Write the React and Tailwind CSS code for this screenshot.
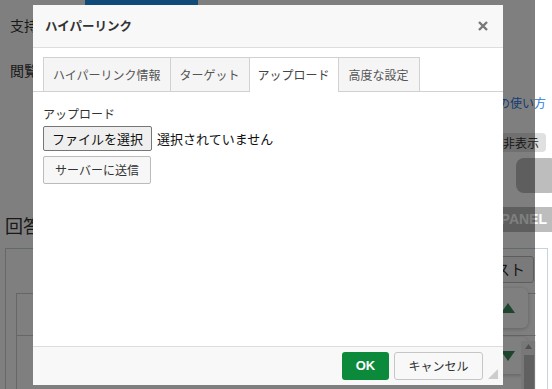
export default function App() {
  const font = "font-['Noto_Sans_CJK_JP','Liberation_Sans',sans-serif]";
  return (
    <div className={`relative w-[552px] h-[389px] overflow-hidden bg-white text-[#333] ${font}`}>
      {/* underlying page */}
      <div className="flex flex-col">
        <div className="flex h-[5px]">
          <div className="ml-[85px] w-[113px] bg-[#2196f3]" />
        </div>
        <div className="flex">
          <div className="flex-1 flex flex-col pl-[10px]">
            <div className="mt-[12px] text-[14px] leading-[16px]">支持</div>
            <div className="mt-[29px] text-[14px] leading-[16px]">閲覧</div>
            <div className="mt-[136px] -ml-[5px] text-[18px] leading-[22px]">回答</div>
          </div>
          <div className="w-[72px] flex flex-col items-end">
            <div className="mt-[90px] mr-[6px] whitespace-nowrap text-[12px] leading-[16px] text-[#2a7ae2]">マニュアルへの使い方</div>
            <div className="mt-[22px] mr-[6px] w-[50px] h-[19px] flex items-center justify-center rounded-[4px] bg-[#e0e0e0] text-[12px]">非表示</div>
            <div className="mt-[6px] -mr-[6px] w-[42px] h-[35px] rounded-[8px] bg-[#bdbdbd]" />
            <div className="mt-[14px] w-[82px] h-[25px] flex items-center justify-end pr-[5px] bg-[#bdbdbd] text-white font-bold text-[14px] font-['Liberation_Sans',sans-serif]">PANEL</div>
          </div>
        </div>
        <div className="mt-[12px] ml-[5px] mr-[4px] h-[200px] border border-[#c5d3da] flex flex-col">
          <div className="pt-[7px] pr-[13px] flex justify-end">
            <div className="h-[27px] px-[8px] flex items-center border border-[#bbb] rounded-[3px] bg-[#f5f5f5] text-[15px]">テスト</div>
          </div>
          <div className="mt-[10px] ml-[10px] mr-[11px] border-t border-l border-[#ccc] flex flex-col">
            <div className="h-[42px] border-b border-[#ccc] flex justify-end pr-[8px]">
              <div className="-mt-[6px] w-[40px] h-[40px] rounded-[6px] bg-white shadow-[0_1px_4px_rgba(0,0,0,0.25)] flex items-center justify-center">
                <svg width="14" height="10" viewBox="0 0 14 10"><polygon points="7,0 14,10 0,10" fill="#3b8a5a" /></svg>
              </div>
            </div>
            <div className="relative h-[60px] flex justify-end pr-[8px]">
              <div className="mt-[1px] w-[40px] h-[37px] rounded-[6px] bg-white shadow-[0_1px_4px_rgba(0,0,0,0.25)] flex items-center justify-center">
                <svg width="14" height="10" viewBox="0 0 14 10"><polygon points="0,0 14,0 7,10" fill="#3b8a5a" /></svg>
              </div>
              <div className="absolute right-0 top-[5px] bottom-0 w-[15px] bg-[#f0f0f0] flex flex-col items-center">
                <svg className="mt-[3px]" width="7" height="5" viewBox="0 0 7 5"><polygon points="3.5,0 7,5 0,5" fill="#a3a3a3" /></svg>
                <div className="mt-[6px] w-[10px] flex-1 bg-[#c1c1c1]" />
              </div>
            </div>
          </div>
        </div>
      </div>

      {/* overlay */}
      <div className="absolute left-0 top-0 h-full w-[535px] bg-black/50" />

      {/* dialog */}
      <div className="absolute left-[33px] top-[5px] w-[470px] h-[380px] bg-white flex flex-col">
        <div className="h-[43px] shrink-0 bg-[#f8f8f8] border-b border-[#ddd] flex items-center justify-between pl-[12px] pr-[15px]">
          <div className="text-[12.5px] font-bold text-[#333] leading-none">ハイパーリンク</div>
          <svg width="10" height="10" viewBox="0 0 10 10">
            <path d="M1 1 L9 9 M9 1 L1 9" stroke="#777" strokeWidth="2.4" />
          </svg>
        </div>
        <div className="pt-[9px] px-[10px] border-b border-[#d1d1d1] flex items-end">
          <div className="h-[34px] px-[9px] flex items-center border-t border-l border-r border-[#d1d1d1] bg-[#f5f5f5] text-[12px] text-[#555]">ハイパーリンク情報</div>
          <div className="h-[34px] px-[9px] flex items-center border-t border-r border-[#d1d1d1] bg-[#f5f5f5] text-[12px] text-[#555]">ターゲット</div>
          <div className="h-[35px] -mb-px px-[8px] flex items-center border-t border-r border-[#d1d1d1] bg-white text-[12px] text-[#444] pb-px">アップロード</div>
          <div className="h-[34px] px-[10px] flex items-center border-t border-r border-[#d1d1d1] bg-[#f5f5f5] text-[12px] text-[#555]">高度な設定</div>
        </div>
        <div className="flex-1 pt-[14px] px-[10px] flex flex-col items-start">
          <div className="text-[12px] leading-[16px] text-[#333]">アップロード</div>
          <div className="mt-[4px] flex items-center">
            <div className="h-[25px] px-[8px] flex items-center border border-[#767676] rounded-[2px] bg-[#efefef] text-[13px] text-[#111]">ファイルを選択</div>
            <div className="ml-[5px] text-[13px] text-[#111]">選択されていません</div>
          </div>
          <div className="mt-[5px] h-[28px] px-[11px] flex items-center border border-[#bbb] rounded-[2px] bg-[#f7f7f7] text-[12px] text-[#333]">サーバーに送信</div>
        </div>
        <div className="relative h-[39px] shrink-0 border-t border-[#ddd] bg-[#f8f8f8] flex items-center justify-end pr-[20px] gap-[5px]">
          <div className="w-[47px] h-[28px] flex items-center justify-center rounded-[3px] bg-[#0b8a3c] text-white font-bold text-[13px] font-['Liberation_Sans',sans-serif]">OK</div>
          <div className="w-[89px] h-[28px] flex items-center justify-center rounded-[3px] border border-[#c6c6c6] bg-[#f8f8f8] text-[12px] text-[#333]">キャンセル</div>
          <svg className="absolute right-[5px] bottom-[6px]" width="10" height="10" viewBox="0 0 10 10">
            <polygon points="10,0 10,10 0,10" fill="#cdcdcd" />
          </svg>
        </div>
      </div>
    </div>
  );
}
